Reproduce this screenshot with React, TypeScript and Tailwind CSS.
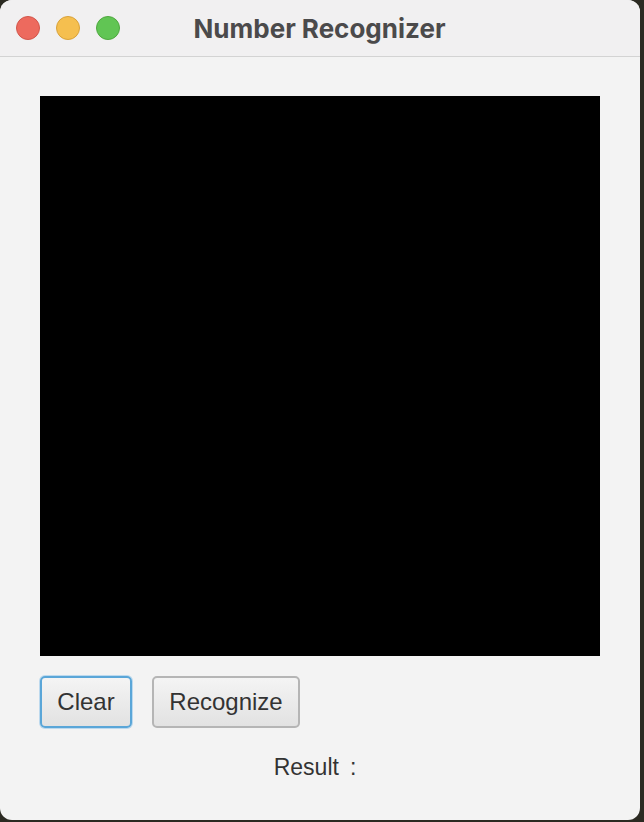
export default function App() {
  return (
    <div className="w-[644px] h-[822px] bg-[#2b2a22] overflow-hidden" style={{ fontFamily: '"Liberation Sans", sans-serif' }}>
      <div className="w-[640px] h-[820px] bg-[#f3f3f3] rounded-[12px] overflow-hidden flex flex-col">
        <div className="h-[57px] bg-[#f1f0f1] border-b border-[#d3d3d3] flex items-center relative shrink-0">
          <div className="flex items-center gap-[16px] pl-[16px]">
            <div className="w-[24px] h-[24px] rounded-full bg-[#ed6a5e] border border-[#d2564b]" />
            <div className="w-[24px] h-[24px] rounded-full bg-[#f5bf4f] border border-[#d9a23a]" />
            <div className="w-[24px] h-[24px] rounded-full bg-[#61c554] border border-[#4fa83f]" />
          </div>
          <div className="absolute inset-0 flex items-center justify-center pointer-events-none pr-[1px]">
            <span className="text-[26px] font-bold text-[#4b4a4b]" style={{ fontFamily: 'Inter, "Liberation Sans", sans-serif' }}>Number Recognizer</span>
          </div>
        </div>
        <div className="flex flex-col pl-[40px] pt-[39px]">
          <div className="w-[560px] h-[560px] bg-black" />
          <div className="flex gap-[20px] mt-[20px]">
            <button className="w-[92px] h-[52px] rounded-[5px] border-2 border-[#5aa6d8] bg-gradient-to-b from-[#f4f4f4] to-[#e2e2e2] text-[24px] text-[#333] shadow-[0_0_0_1px_#bcd9ee]">Clear</button>
            <button className="w-[148px] h-[52px] rounded-[5px] border-2 border-[#b5b5b5] bg-gradient-to-b from-[#f4f4f4] to-[#e2e2e2] text-[24px] text-[#333]">Recognize</button>
          </div>
        </div>
        <div className="flex justify-center items-baseline mt-[22px] pr-[10px]">
          <span className="text-[23px] text-[#333]">Result</span>
          <span className="text-[23px] text-[#333] ml-[11px]">:</span>
        </div>
      </div>
    </div>
  );
}
